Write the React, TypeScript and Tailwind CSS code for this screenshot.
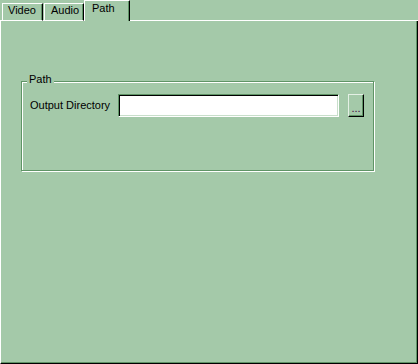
import React from 'react';

const font = { fontFamily: '"Liberation Sans", Arial, sans-serif' };

function Tab({ label, active, className }: { label: string; active?: boolean; className: string }) {
  if (active) {
    return (
      <div className={`h-[21px] border-t border-l border-r border-t-white border-l-white border-r-black shadow-[inset_-1px_0_0_#5f9466] pt-[1px] ${className}`}>
        {label}
      </div>
    );
  }
  return (
    <div className={`h-[18px] border border-t-white border-l-white border-r-black border-b-white shadow-[inset_-1px_0_0_#5f9466] leading-[13px] ${className}`}>
      {label}
    </div>
  );
}

export default function App() {
  return (
    <div className="w-[418px] h-[364px] bg-[#a4c9a9] flex flex-col text-[11px] leading-[13px] text-black" style={font}>
      {/* tab strip */}
      <div className="h-[21px] flex items-end">
        <div className="w-[2px] h-px bg-white" />
        <Tab label="Video" className="w-[41px] pl-[5px]" />
        <div className="w-[1px] h-px bg-white" />
        <Tab label="Audio" className="w-[40px] pl-[6px]" />
        <Tab label="Path" active className="w-[46px] pl-[7px]" />
        <div className="flex-1 h-px bg-white" />
      </div>

      {/* page */}
      <div className="flex-1 border-l border-r border-b border-l-white border-r-black border-b-black shadow-[inset_-1px_-1px_0_#5f9466] pl-[20px] pt-[60px]">
        <div className="relative w-[353px] h-[90px] border border-[#5f9466] shadow-[1px_1px_0_#fff,inset_1px_1px_0_#fff] pl-[8px] pt-[12px]">
          <div className="absolute left-[5px] -top-[9px] px-[2px] bg-[#a4c9a9]">Path</div>
          <div className="flex items-center">
            <span className="w-[88px]">Output Directory</span>
            <div className="w-[221px] h-[23px] border border-t-[#5f9466] border-l-[#5f9466] border-b-white border-r-white bg-white shadow-[inset_1px_1px_0_#000,inset_-1px_-1px_0_#c8dfcb]" />
            <button className="ml-[9px] w-[16px] h-[23px] border border-t-[#e4f0e5] border-l-[#e4f0e5] border-r-black border-b-black shadow-[inset_-1px_-1px_0_#5f9466] flex items-end justify-center pb-[4px] text-[#400040] leading-[8px]">
              ...
            </button>
          </div>
        </div>
      </div>
    </div>
  );
}
